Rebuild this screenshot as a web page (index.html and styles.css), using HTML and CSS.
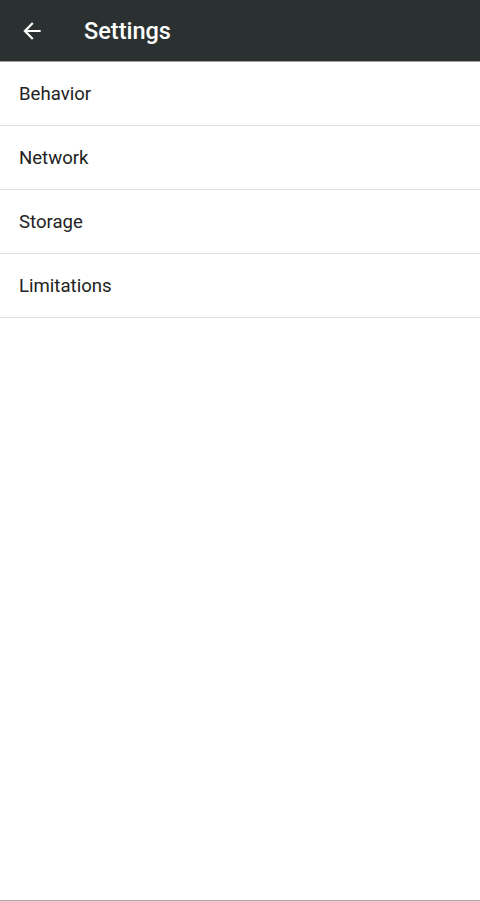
FILE: index.html
```html
<!doctype html>
<html>
<head>
<meta charset="utf-8">
	<meta name="viewport" content="width=device-width,initial-scale=1.0"/>
<title>Settings</title>
	<link rel="stylesheet" href="styles.css">
</head>

<body>
	<div class="app">
		<header class="toolbar">
			<button class="back-btn" aria-label="Back">
				<svg width="26" height="26" viewBox="0 0 24 24"><path d="M20 11H7.83l5.59-5.59L12 4l-8 8 8 8 1.41-1.41L7.83 13H20v-2z" fill="#fff"/></svg>
			</button>
			<h1>Settings</h1>
		</header>
		<ul class="settings-list">
			<li>Behavior</li>
			<li>Network</li>
			<li>Storage</li>
			<li>Limitations</li>
		</ul>
		<div class="bottom-line"></div>
	</div>
</body>
</html>
```
FILE: styles.css
```css
html, body{
	margin: 0;
	padding: 0;
	height: 100%;
}
body{
	font-family: Roboto, "Liberation Sans", sans-serif;
	background-color: #FFFFFF;
	color: #222222;
}
.app{
	height: 901px;
	display: flex;
	flex-direction: column;
}
.toolbar{
	background-color: #2B3131;
	display: flex;
	align-items: center;
	border-bottom: 1px solid #9a9e9e;
	box-sizing: border-box;
	height: 62px;
}
.back-btn{
	background: none;
	border: none;
	padding: 0;
	margin-left: 19px;
	width: 26px;
	height: 26px;
	display: flex;
	cursor: pointer;
}
.toolbar h1{
	margin: 0 0 0 39px;
	font-size: 23.5px;
	font-weight: 500;
	color: #FFFFFF;
}
.settings-list{
	list-style: none;
	margin: 0;
	padding: 0;
	flex: 1;
}
.settings-list li{
	height: 63px;
	display: flex;
	align-items: center;
	padding-left: 19px;
	font-size: 18.6px;
	border-bottom: 1px solid #E0E0E0;
}
.bottom-line{
	height: 1px;
	background-color: #ABABAB;
}
```
